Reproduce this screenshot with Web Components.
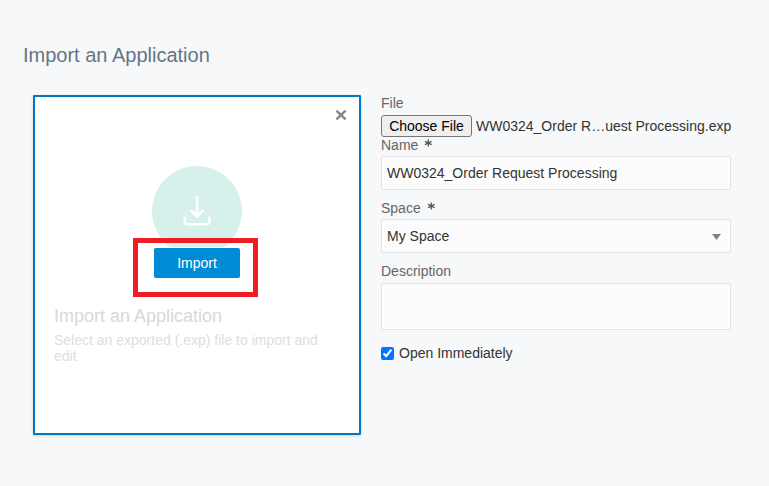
<!DOCTYPE html>
<html lang="en">
<head>
<meta charset="utf-8">
<title>Import an Application</title>
<style>
html,body{margin:0;height:100%;overflow:hidden;background:#f7f8fa}
body{font-family:"Liberation Sans",Arial,sans-serif;font-size:14px;color:#333}
</style>
</head>
<body>
<import-page>
  <import-card slot="card" heading="Import an Application" action="Import">Select an exported (.exp) file to import and edit</import-card>
  <import-form slot="form">
    <file-picker label="File" filename="WW0324_Order R…uest Processing.exp"></file-picker>
    <form-field label="Name" required>WW0324_Order Request Processing</form-field>
    <form-field label="Space" required dropdown>My Space</form-field>
    <form-field label="Description" multiline></form-field>
    <check-option>Open Immediately</check-option>
  </import-form>
</import-page>
<script>
const define = (name, render) => customElements.define(name, class extends HTMLElement {
  constructor() { super(); this.attachShadow({ mode: 'open' }); }
  connectedCallback() { this.shadowRoot.innerHTML = render(this); }
});

define('import-page', () => `
<style>
:host{display:block;box-sizing:border-box;height:486px;padding:43px 38px 0 23px}
h1{margin:0 0 28px;font-size:20px;font-weight:400;line-height:24px;color:#657585}
main{display:flex;gap:20px;padding-left:10px}
</style>
<h1>Import an Application</h1>
<main><slot name="card"></slot><slot name="form"></slot></main>`);

define('import-card', el => `
<style>
:host{display:flex;flex-direction:column;box-sizing:border-box;position:relative;flex:none;width:328px;height:340px;padding:69px 19px 0;border:2px solid #0079c1;border-radius:1px;background:#fff;box-shadow:0 1px 3px rgba(0,0,0,.16)}
.circle{align-self:center;display:flex;justify-content:center;align-items:center;width:90px;height:90px;border-radius:50%;background:#d6f1eb}
h2{margin:50px 0 0;font-size:18px;line-height:20px;font-weight:400;color:#d8d8d8}
p{margin:6px 0 0;line-height:16px;color:#dedede}
.close{position:absolute;right:12px;top:12px;width:12px;height:12px}
.mark{position:absolute;left:98px;top:141px;box-sizing:border-box;width:125px;height:59px;border:5px solid #ee1c25}
button{position:absolute;left:119px;top:151px;width:86px;height:30px;padding:0;border:0;border-radius:2px;background:#008bd6;box-shadow:0 0 0 1px #fff;color:#fff;font:14px "Liberation Sans",Arial,sans-serif}
</style>
<svg class="close" viewBox="0 0 12 12"><path d="M1.4 1.6L10.6 10.4M10.6 1.6L1.4 10.4" stroke="#84888c" stroke-width="2.5"/></svg>
<div class="circle"><svg width="30" height="32" viewBox="0 0 30 32" fill="none" stroke="#fff" stroke-width="2.6" stroke-linecap="round" stroke-linejoin="round"><path d="M15 2.2V21M9.4 15.9L15 21.3L20.6 15.9M2.8 22.9V26Q2.8 29.3 6 29.3H24.2Q27.4 29.3 27.4 26V22.9"/></svg></div>
<button>${el.getAttribute('action')}</button>
<div class="mark"></div>
<h2>${el.getAttribute('heading')}</h2>
<p><slot></slot></p>`);

define('import-form', () => `
<style>:host{display:flex;flex-direction:column;width:350px}</style>
<slot></slot>`);

define('file-picker', el => `
<style>
:host{display:block}
label{display:block;height:20px;line-height:16px;color:#666}
div{display:flex;gap:4px;align-items:center;height:22px;white-space:nowrap}
button{flex:none;box-sizing:border-box;width:91px;height:22px;padding:0;border:1px solid #767676;border-radius:3px;background:#efefef;color:#000;font:14px "Liberation Sans",Arial,sans-serif}
</style>
<label>${el.getAttribute('label')}</label>
<div><button>Choose File</button><span>${el.getAttribute('filename')}</span></div>`);

define('form-field', el => `
<style>
:host{display:block;margin-bottom:10px}
label{display:flex;gap:6px;height:19px;line-height:17px;color:#666}
label svg{width:8px;height:8px;margin-top:2px}
.box{display:flex;align-items:center;justify-content:space-between;box-sizing:border-box;height:34px;padding:0 9px 0 5px;border:1px solid #e3e4e5;border-radius:2px;background:#fcfcfc}
:host([multiline]) .box{height:47px;margin-top:1px}
</style>
<label>${el.getAttribute('label')}${el.hasAttribute('required') ? '<svg viewBox="0 0 8 8"><path d="M4.3 .6V7.4M1 2.4L7.6 5.6M7.6 2.4L1 5.6" stroke="#555" stroke-width="1.3"/></svg>' : ''}</label>
<div class="box"><slot></slot>${el.hasAttribute('dropdown') ? '<svg width="9" height="6" viewBox="0 0 9 6" style="margin-top:2px"><path d="M0 0H9L4.5 6Z" fill="#828487"/></svg>' : ''}</div>`);

define('check-option', () => `
<style>
:host{display:block;margin-top:5px}
label{display:flex;align-items:center;gap:5px;height:16px;line-height:16px}
input{margin:1px 0 0;width:13px;height:13px}
</style>
<label><input type="checkbox" checked><span><slot></slot></span></label>`);
</script>
</body>
</html>
